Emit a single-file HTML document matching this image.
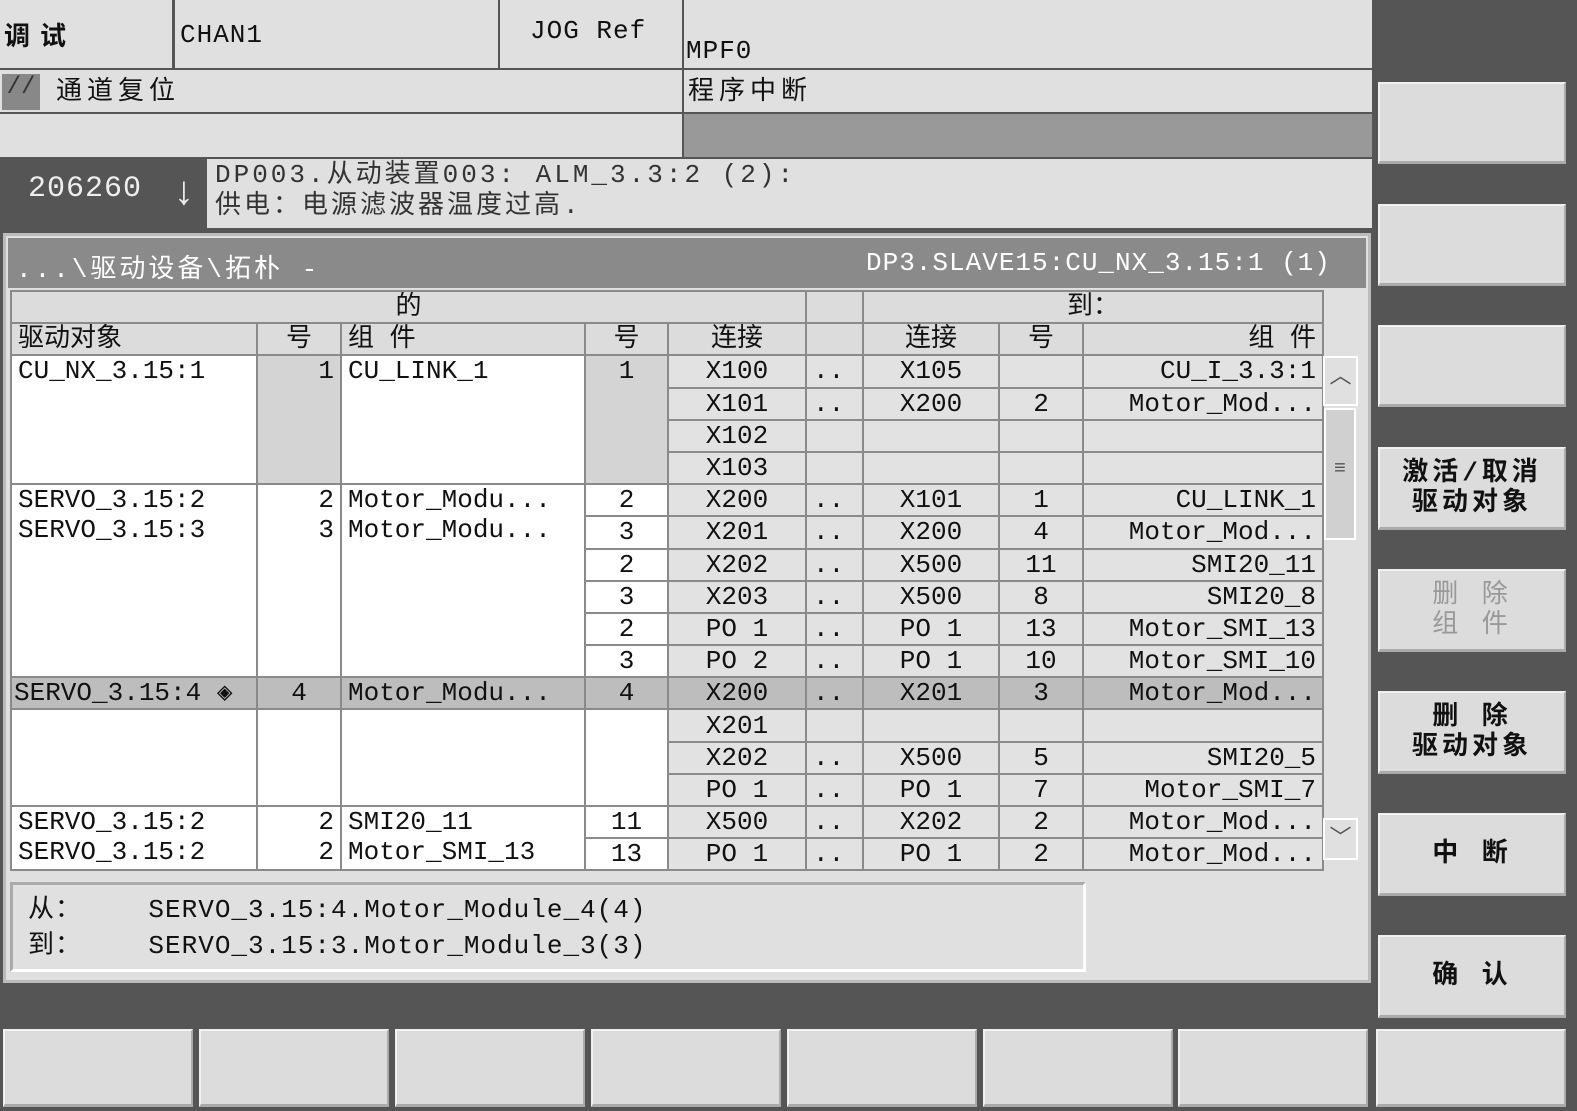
<!DOCTYPE html><html><head><meta charset="utf-8"><style>
body{margin:0;width:1577px;height:1111px;background:#555;position:relative;overflow:hidden;font-family:"Liberation Mono","WenQuanYi Zen Hei","Noto Sans CJK SC",monospace;color:#111}
.a{position:absolute;box-sizing:border-box}
.l{background:#e0e0e0}
.t{font-size:26px;white-space:pre;letter-spacing:1px}
.k{position:absolute;box-sizing:border-box;background:#dcdcdc;border-top:2px solid #f0f0f0;border-left:2px solid #f0f0f0;border-bottom:3px solid #aaa;border-right:2px solid #aaa;font-size:26px;text-align:center;display:flex;align-items:center;justify-content:center;line-height:30px;font-weight:bold;letter-spacing:4px}
table{position:absolute;left:10px;top:290px;border-collapse:collapse;table-layout:fixed;font-size:26px}
td{border:2px solid #8a8a8a;height:30px;padding:0 6px;white-space:nowrap;overflow:hidden;background:#e2e2e2;line-height:30px;box-sizing:content-box}
tr{height:32.2px}
td.w{background:#fff;vertical-align:top}
td.g{background:#d4d4d4;vertical-align:top}
td.c{text-align:center}td.r{text-align:right}
tr.h td{background:#bdbdbd}
thead td{background:#dcdcdc}
</style></head><body>
<div class="a l" style="left:0;top:0;width:172px;height:68px"></div>
<div class="a t" style="left:4px;top:16px;font-weight:bold;letter-spacing:10px">调试</div>
<div class="a l" style="left:175px;top:0;width:323px;height:68px"></div>
<div class="a t" style="left:180px;top:20px">CHAN1</div>
<div class="a l" style="left:500px;top:0;width:182px;height:68px"></div>
<div class="a t" style="left:530px;top:16px">JOG Ref</div>
<div class="a l" style="left:684px;top:0;width:688px;height:68px"></div>
<div class="a t" style="left:686px;top:36px">MPF0</div>
<div class="a l" style="left:0;top:70px;width:682px;height:42px"></div>
<div class="a" style="left:2px;top:74px;width:38px;height:36px;background:#888;color:#333;font-size:24px;text-align:center">//</div>
<div class="a t" style="left:56px;top:70px;letter-spacing:5px">通道复位</div>
<div class="a l" style="left:684px;top:70px;width:688px;height:42px"></div>
<div class="a t" style="left:688px;top:70px;letter-spacing:5px">程序中断</div>
<div class="a l" style="left:0;top:114px;width:682px;height:43px"></div>
<div class="a" style="left:684px;top:114px;width:688px;height:43px;background:#999"></div>
<div class="a l" style="left:207px;top:159px;width:1165px;height:69px"></div>
<div class="a t" style="left:28px;top:172px;color:#eee;font-size:30px">206260</div>
<div class="a" style="left:172px;top:172px;color:#eee;font-size:40px;font-weight:bold">↓</div>
<div class="a t" style="left:215px;top:160px;line-height:31px;color:#333;letter-spacing:3px">DP003.从动装置003: ALM_3.3:2 (2):
供电：电源滤波器温度过高.</div>
<div class="a" style="left:3px;top:233px;width:1368px;height:750px;background:#e0e0e0;border:3px solid #bbb"></div>
<div class="a" style="left:8px;top:238px;width:1358px;height:50px;background:#8a8a8a"></div>
<div class="a t" style="left:16px;top:248px;color:#fff;letter-spacing:3px">...\驱动设备\拓朴 -</div>
<div class="a t" style="left:866px;top:248px;color:#fff">DP3.SLAVE15:CU_NX_3.15:1 (1)</div>
<table>
<colgroup><col style="width:246px"><col style="width:84px"><col style="width:244px"><col style="width:83px"><col style="width:138px"><col style="width:57px"><col style="width:136px"><col style="width:84px"><col style="width:240px"></colgroup>
<thead><tr><td colspan="5" class="c">的</td><td></td><td colspan="3" class="c">到：</td></tr>
<tr><td>驱动对象</td><td class="c">号</td><td>组 件</td><td class="c">号</td><td class="c">连接</td><td></td><td class="c">连接</td><td class="c">号</td><td class="r">组 件</td></tr></thead>
<tbody>
<tr><td class="w" rowspan="4">CU_NX_3.15:1</td><td class="g r" rowspan="4">1</td><td class="w" rowspan="4">CU_LINK_1</td><td class="g c" rowspan="4">1</td><td class="c">X100</td><td>..</td><td class="c">X105</td><td></td><td class="r">CU_I_3.3:1</td></tr>
<tr><td class="c">X101</td><td>..</td><td class="c">X200</td><td class="c">2</td><td class="r">Motor_Mod...</td></tr>
<tr><td class="c">X102</td><td></td><td></td><td></td><td></td></tr>
<tr><td class="c">X103</td><td></td><td></td><td></td><td></td></tr>
<tr><td class="w" rowspan="6">SERVO_3.15:2<br>SERVO_3.15:3</td><td class="w r" rowspan="6">2<br>3</td><td class="w" rowspan="6">Motor_Modu...<br>Motor_Modu...</td><td class="w c">2</td><td class="c">X200</td><td>..</td><td class="c">X101</td><td class="c">1</td><td class="r">CU_LINK_1</td></tr>
<tr><td class="w c">3</td><td class="c">X201</td><td>..</td><td class="c">X200</td><td class="c">4</td><td class="r">Motor_Mod...</td></tr>
<tr><td class="w c">2</td><td class="c">X202</td><td>..</td><td class="c">X500</td><td class="c">11</td><td class="r">SMI20_11</td></tr>
<tr><td class="w c">3</td><td class="c">X203</td><td>..</td><td class="c">X500</td><td class="c">8</td><td class="r">SMI20_8</td></tr>
<tr><td class="w c">2</td><td class="c">PO 1</td><td>..</td><td class="c">PO 1</td><td class="c">13</td><td class="r">Motor_SMI_13</td></tr>
<tr><td class="w c">3</td><td class="c">PO 2</td><td>..</td><td class="c">PO 1</td><td class="c">10</td><td class="r">Motor_SMI_10</td></tr>
<tr class="h"><td style="padding:0 2px">SERVO_3.15:4 ◈</td><td class="c">4</td><td>Motor_Modu...</td><td class="c">4</td><td class="c">X200</td><td>..</td><td class="c">X201</td><td class="c">3</td><td class="r">Motor_Mod...</td></tr>
<tr><td class="w" rowspan="3"></td><td class="w" rowspan="3"></td><td class="w" rowspan="3"></td><td class="w" rowspan="3"></td><td class="c">X201</td><td></td><td></td><td></td><td></td></tr>
<tr><td class="c">X202</td><td>..</td><td class="c">X500</td><td class="c">5</td><td class="r">SMI20_5</td></tr>
<tr><td class="c">PO 1</td><td>..</td><td class="c">PO 1</td><td class="c">7</td><td class="r">Motor_SMI_7</td></tr>
<tr><td class="w" rowspan="2">SERVO_3.15:2<br>SERVO_3.15:2</td><td class="w r" rowspan="2">2<br>2</td><td class="w" rowspan="2">SMI20_11<br>Motor_SMI_13</td><td class="w c">11</td><td class="c">X500</td><td>..</td><td class="c">X202</td><td class="c">2</td><td class="r">Motor_Mod...</td></tr>
<tr><td class="w c">13</td><td class="c">PO 1</td><td>..</td><td class="c">PO 1</td><td class="c">2</td><td class="r">Motor_Mod...</td></tr>
</tbody></table>
<div class="a" style="left:1323px;top:356px;width:35px;height:50px;border:2px solid #fff;text-align:center;font-size:22px;color:#555">︿</div>
<div class="a" style="left:1324px;top:408px;width:32px;height:132px;background:#d0d0d0;border:2px solid #fff;text-align:center;padding-top:48px;font-size:20px;color:#555">≡</div>
<div class="a" style="left:1323px;top:818px;width:35px;height:42px;border:2px solid #fff;text-align:center;font-size:22px;color:#555">﹀</div>
<div class="a" style="left:10px;top:882px;width:1076px;height:90px;border:3px solid #fff;border-top-color:#aaa;border-left-color:#aaa"></div>
<div class="a t" style="left:28px;top:892px;line-height:36px">从：    SERVO_3.15:4.Motor_Module_4(4)
到：    SERVO_3.15:3.Motor_Module_3(3)</div>
<div class="k" style="left:1378px;top:82px;width:188px;height:82px"></div>
<div class="k" style="left:1378px;top:204px;width:188px;height:82px"></div>
<div class="k" style="left:1378px;top:325px;width:188px;height:82px"></div>
<div class="k" style="left:1378px;top:447px;width:188px;height:83px">激活/取消<br>驱动对象</div>
<div class="k" style="left:1378px;top:569px;width:188px;height:83px;color:#999;font-weight:normal">删  除<br>组  件</div>
<div class="k" style="left:1378px;top:691px;width:188px;height:83px">删   除<br>驱动对象</div>
<div class="k" style="left:1378px;top:813px;width:188px;height:83px">中 断</div>
<div class="k" style="left:1378px;top:935px;width:188px;height:83px">确 认</div>
<div class="k" style="left:3px;top:1029px;width:190px;height:78px"></div>
<div class="k" style="left:199px;top:1029px;width:190px;height:78px"></div>
<div class="k" style="left:395px;top:1029px;width:190px;height:78px"></div>
<div class="k" style="left:591px;top:1029px;width:190px;height:78px"></div>
<div class="k" style="left:787px;top:1029px;width:190px;height:78px"></div>
<div class="k" style="left:983px;top:1029px;width:190px;height:78px"></div>
<div class="k" style="left:1178px;top:1029px;width:190px;height:78px"></div>
<div class="k" style="left:1376px;top:1029px;width:190px;height:78px"></div>
</body></html>
